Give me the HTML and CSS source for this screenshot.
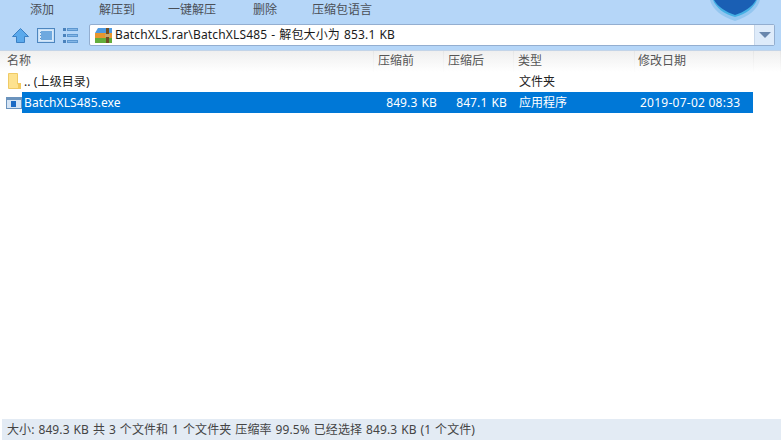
FILE: index.html
```html
<!DOCTYPE html>
<html lang="zh">
<head>
<meta charset="utf-8">
<title>BatchXLS.rar</title>
<link rel="stylesheet" href="styles.css">
</head>
<body>
<header class="top">
  <nav class="tools">
    <span class="tool t1">添加</span>
    <span class="tool t2">解压到</span>
    <span class="tool t3">一键解压</span>
    <span class="tool t4">删除</span>
    <span class="tool t5">压缩包语言</span>
  </nav>
  <svg class="shield" width="50" height="21" viewBox="0 0 50 21">
    <path d="M0 0 C2 9 12 17 25 21 C38 17 48 9 50 0Z" fill="#93c6f0"/>
    <path d="M3 0 C6 8 14 14 25 17 C36 14 44 8 47 0Z" fill="#45b0e4"/>
    <path d="M4 0 C8 7 16 12 25 15 C34 12 42 7 46 0Z" fill="#1a5fb4"/>
  </svg>
  <div class="nav">
    <svg class="ico up" width="17" height="15" viewBox="0 0 17 15"><path d="M8.5 0.5 L16.5 8.5 H12.5 V14.5 H4.5 V8.5 H0.5Z" fill="#5aa9ec" stroke="#3b80c4"/></svg>
    <svg class="ico view" width="18" height="15" viewBox="0 0 18 15"><rect x="0.5" y="0.5" width="17" height="14" fill="#c5def6" stroke="#4d86bf"/><rect x="2" y="2" width="14" height="11" fill="#d8e9f9"/><rect x="4" y="3" width="11" height="9" fill="#6fa9df"/><g fill="#5d93c8"><rect x="3" y="4" width="1" height="1"/><rect x="3" y="7" width="1" height="1"/><rect x="3" y="10" width="1" height="1"/></g></svg>
    <svg class="ico list" width="15" height="15" viewBox="0 0 15 15"><g fill="#4a82bc"><rect x="0" y="0" width="3" height="3"/><rect x="0" y="6" width="3" height="3"/><rect x="0" y="12" width="3" height="3"/></g><g fill="#84b6e6" stroke="#5d97d0"><rect x="4.5" y="0.5" width="10" height="2"/><rect x="4.5" y="6.5" width="10" height="2"/><rect x="4.5" y="12.5" width="10" height="2"/></g></svg>
    <div class="addr">
      <svg class="rar" width="17" height="15" viewBox="0 0 17 15">
        <path d="M0 5 L3 0 H17 V5Z" fill="#4f9ae0"/>
        <rect x="0" y="5" width="17" height="5" fill="#e8962e"/>
        <rect x="0" y="10" width="17" height="5" fill="#63ad3c"/>
        <rect x="11" y="0" width="3" height="15" fill="#6f4e22"/>
        <rect x="10" y="6" width="5" height="3" fill="#caa66a"/>
      </svg>
      <span class="path">BatchXLS.rar\BatchXLS485 - 解包大小为 853.1 KB</span>
      <span class="drop"><svg width="12" height="6" viewBox="0 0 12 6"><path d="M0 0H12L6 6Z" fill="#6a87ad"/></svg></span>
    </div>
  </div>
</header>

<div class="cols">
  <span class="col c-name">名称</span>
  <span class="col c-orig">压缩前</span>
  <span class="col c-comp">压缩后</span>
  <span class="col c-type">类型</span>
  <span class="col c-date">修改日期</span>
  <span class="col c-end"></span>
</div>

<div class="row">
  <svg class="ficon folder" width="13" height="16" viewBox="0 0 13 16"><path d="M0.5 0.5H9.5V11H12.5V15.5H0.5Z" fill="#fde28f" stroke="#efca66"/><rect x="10" y="10" width="3" height="6" fill="#f2c95f"/></svg>
  <span class="c-name cell">.. (上级目录)</span>
  <span class="c-orig cell"></span>
  <span class="c-comp cell"></span>
  <span class="c-type cell">文件夹</span>
</div>
<div class="row">
  <svg class="ficon exe" width="16" height="12" viewBox="0 0 16 12"><rect width="16" height="12" fill="#6b93bd"/><rect x="1" y="3" width="14" height="8" fill="#d5e4f4"/><rect x="5" y="4" width="5" height="6" fill="#1b6ac4"/></svg>
  <div class="sel">
    <span class="c-name cell">BatchXLS485.exe</span>
    <span class="c-orig cell num">849.3 KB</span>
    <span class="c-comp cell num">847.1 KB</span>
    <span class="c-type cell">应用程序</span>
    <span class="c-date cell">2019-07-02 08:33</span>
  </div>
</div>

<footer class="status">大小: 849.3 KB 共 3 个文件和 1 个文件夹 压缩率 99.5% 已经选择 849.3 KB (1 个文件)</footer>
</body>
</html>
```

FILE: styles.css
```css
* { box-sizing: border-box; }
html, body { margin: 0; height: 446px; overflow: hidden; background: #fff; }
body {
  font: 12px/20px "Noto Sans", "Noto Sans CJK SC", sans-serif;
  color: #222;
  display: flex;
  flex-direction: column;
}
.top {
  position: relative;
  height: 51px;
  background: #b5d6f8;
  border-bottom: 1px solid #c3d4e8;
}
.tools { display: flex; height: 24px; align-items: flex-start; color: #4a4f57; }
.tool { display: block; }
.t1 { margin-left: 30px; width: 69px; }
.t2 { width: 69px; }
.t3 { width: 85px; }
.t4 { width: 59px; }
.shield { position: absolute; left: 710px; top: 0; }
.nav { display: flex; align-items: center; height: 22px; padding-left: 12px; }
.ico { flex: none; }
.view { margin-left: 8px; }
.list { margin-left: 8px; }
.addr {
  flex: none;
  width: 686px;
  height: 22px;
  margin-left: 11px;
  background: #fff;
  border: 1px solid #93aed0;
  border-radius: 2px;
  display: flex;
  align-items: center;
  padding-left: 5px;
  color: #1a1a1a;
}
.rar { flex: none; }
.path { margin-left: 3px; flex: 1; letter-spacing: 0.15px; word-spacing: 0.75px; }
.drop {
  flex: none;
  width: 20px;
  height: 20px;
  display: flex;
  align-items: center;
  justify-content: center;
  background: #deebfa;
  border-left: 1px solid #c9d8ea;
}
.cols {
  display: flex;
  height: 21px;
  flex: none;
  background: linear-gradient(#efefef, #fff);
  color: #555;
}
.col {
  display: block;
  height: 21px;
  padding-left: 4px;
  border-right: 1px solid transparent;
  border-image: linear-gradient(#e4e4e4, #fff) 1;
}
.c-name { width: 374px; flex: none; }
.c-orig { width: 70px; flex: none; }
.c-comp { width: 70px; flex: none; }
.c-type { width: 121px; flex: none; }
.c-date { width: 119px; flex: none; }
.col.c-name { padding-left: 7px; }
.col.c-date { padding-left: 3px; }
.col.c-end { width: 27px; }
.row { display: flex; height: 20.5px; flex: none; align-items: center; position: relative; color: #222; }
.ficon { position: absolute; }
.folder { left: 8px; top: 1px; }
.exe { left: 6px; top: 4px; }
.cell { display: block; padding-left: 5px; white-space: nowrap; }
.row > .c-name { padding-left: 24px; letter-spacing: 0.1px; }
.sel {
  display: flex;
  margin-left: 22px;
  width: 731px;
  height: 21px;
  background: #0078d7;
  color: #fff;
  align-items: center;
}
.sel .c-name { width: 352px; padding-left: 2px; letter-spacing: 0.1px; }
.sel .num { text-align: right; padding-right: 7px; padding-left: 0; letter-spacing: 0.1px; word-spacing: 1px; }
.sel .c-date { letter-spacing: 0.25px; }
.status {
  margin: auto 0 6px 2px;
  height: 21px;
  flex: none;
  padding-left: 5px;
  background: #e3ebf4;
  color: #444;
  line-height: 21px;
  letter-spacing: 0.1px;
  word-spacing: 0.7px;
}
```
